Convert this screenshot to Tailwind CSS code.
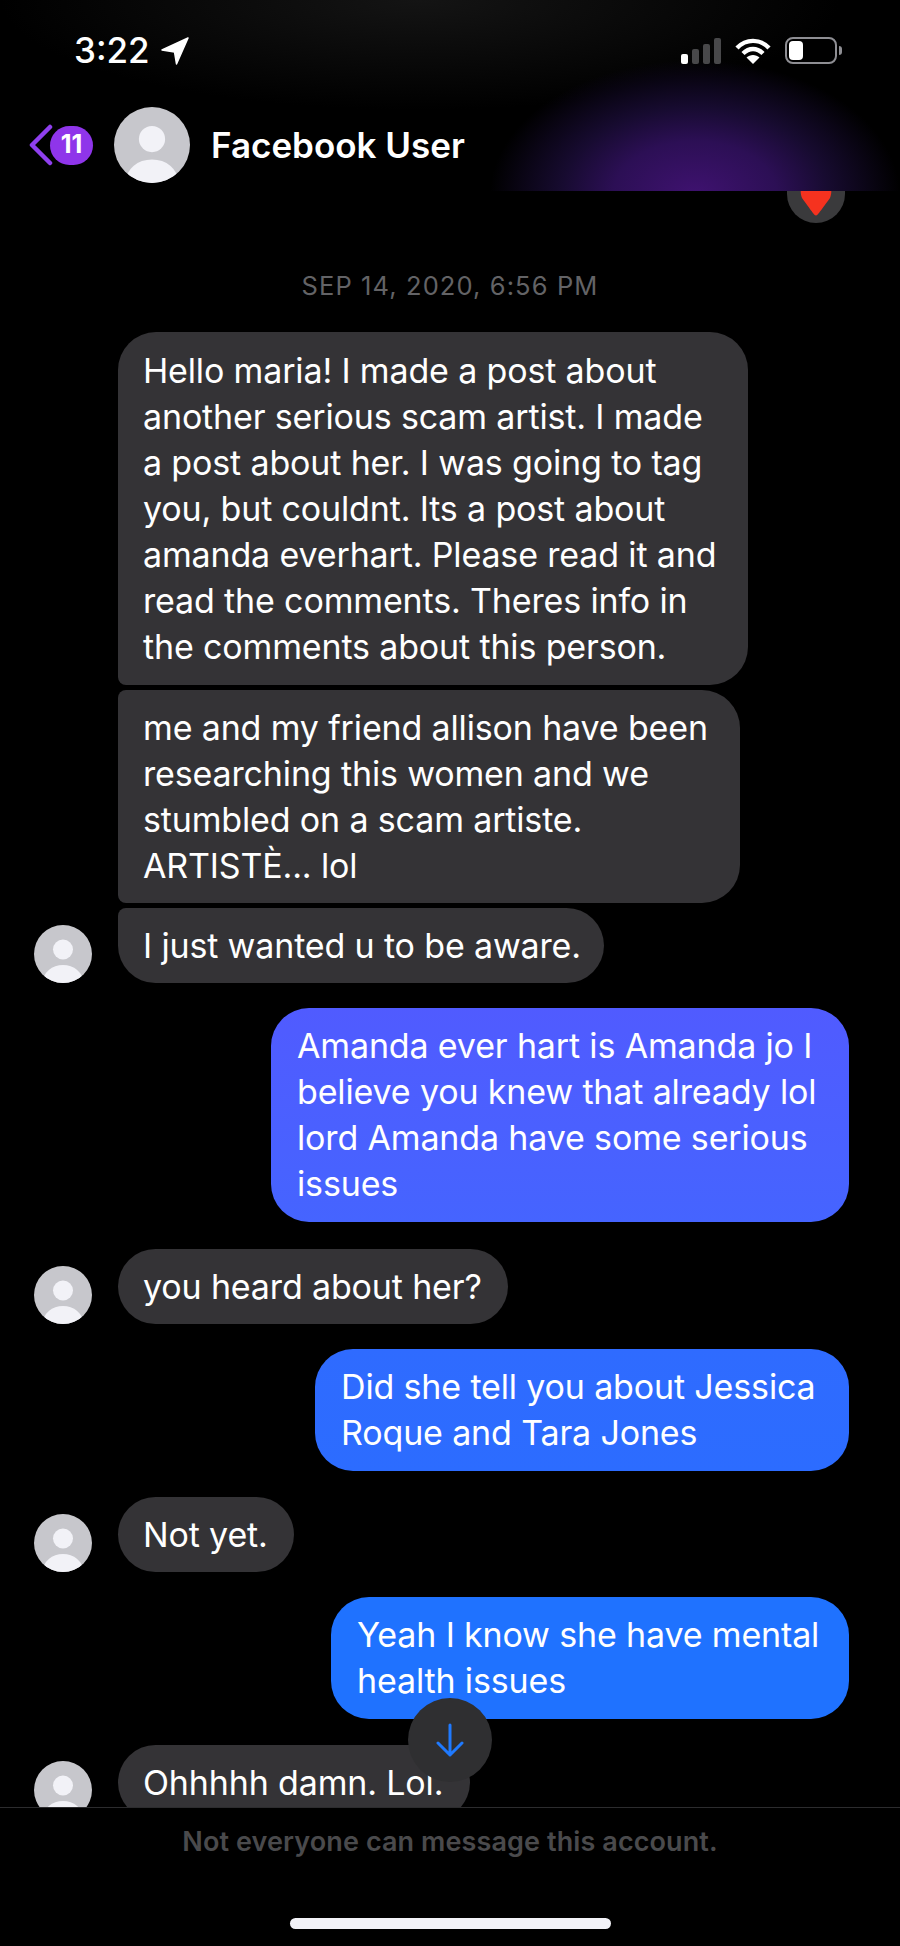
<!DOCTYPE html>
<html lang="en">
<head>
    <meta charset="UTF-8">
    <meta name="viewport" content="width=device-width, initial-scale=1.0">
    <title>Facebook User</title>
    <script src="https://cdn.jsdelivr.net/npm/@tailwindcss/browser@4"></script>
</head>
<body class="bg-black text-white font-['Inter','Liberation_Sans',sans-serif]">
    <div class="relative w-[900px] h-[1946px] flex flex-col bg-black overflow-hidden">

        <!-- Status bar and conversation title -->
        <header class="relative z-10 h-[191px] shrink-0 pt-[37px] bg-[radial-gradient(ellipse_205px_135px_at_695px_195px,#3f1270_0%,#2c0f55_40%,#170b30_65%,#0a0515_85%,transparent_100%),radial-gradient(ellipse_420px_110px_at_420px_0px,#141414_0%,transparent_100%)]">
            <div class="flex items-center h-[27px] pl-[74px] pr-[63px]">
                <span class="text-[35px] leading-[27px] font-medium">3:22</span>
                <svg class="ml-[11px]" width="28" height="28" viewBox="0 0 28 28"><path d="M27 1 L1 13 L13.5 15 L15.5 27 Z" fill="#fff" stroke="#fff" stroke-width="1.5" stroke-linejoin="round"/></svg>
                <div class="ml-auto flex items-end gap-[4px] h-[26px]">
                    <span class="w-[7px] h-[10px] rounded-[2px] bg-white"></span>
                    <span class="w-[7px] h-[15px] rounded-[2px] bg-[#48484a]"></span>
                    <span class="w-[7px] h-[20px] rounded-[2px] bg-[#48484a]"></span>
                    <span class="w-[7px] h-[26px] rounded-[2px] bg-[#48484a]"></span>
                </div>
                <svg class="ml-[14px]" width="36" height="26" viewBox="0 0 36 26" fill="none" stroke="#fff" stroke-width="4.4">
                    <path d="M2 10 C11 0.5 25 0.5 34 10"/>
                    <path d="M8 15.5 C14 9.5 22 9.5 28 15.5"/>
                    <path d="M18 26 L11.5 19.5 C15 16 21 16 24.5 19.5 Z" fill="#fff" stroke="none"/>
                </svg>
                <div class="ml-[14px] relative w-[52px] h-[27px] rounded-[8px] border-2 border-[#8e8e93] p-[2px]">
                    <div class="w-[14px] h-full rounded-[4px] bg-white"></div>
                    <div class="absolute right-[-7px] top-[7px] w-[3px] h-[9px] rounded-r-[3px] bg-[#8e8e93]"></div>
                </div>
            </div>
            <div class="flex items-center pl-[29px] mt-[43px]">
                <svg width="24" height="42" viewBox="0 0 24 42" fill="none" stroke="#8f3fee" stroke-width="4.5" stroke-linecap="round" stroke-linejoin="round"><path d="M21 3 L3 21 L21 39"/></svg>
                <span class="-ml-[3px] w-[43px] h-[39px] rounded-full bg-[#8f35ea] flex items-center justify-center text-[25px] font-bold">11</span>
                <div class="ml-[21px] w-[76px] h-[76px] rounded-full overflow-hidden">
                    <svg width="76" height="76" viewBox="0 0 58 58"><rect width="58" height="58" fill="#c7c7cc"/><circle cx="29" cy="24.5" r="10" fill="#f2f2f7"/><ellipse cx="29" cy="57" rx="20" ry="17" fill="#f2f2f7"/></svg>
                </div>
                <h1 class="ml-[21px] text-[35px] font-semibold">Facebook User</h1>
            </div>
        </header>

        <!-- Message thread -->
        <main class="flex-1 min-h-0 overflow-hidden flex flex-col text-[34px] leading-[46px] tracking-[-0.15px] whitespace-nowrap">
            <div class="-mt-[28px] self-end mr-[55px] w-[58px] h-[60px] shrink-0 rounded-full bg-[#3a3a3c] flex items-end justify-center pb-[7px]">
                <svg width="32" height="36" viewBox="0 0 32 36"><path d="M16 35.5 C14.5 35.5 13 33 2 18 C-2 8 4 0 10 0 C13 0 15 2 16 4 C17 2 19 0 22 0 C28 0 34 8 30 18 C19 33 17.5 35.5 16 35.5 Z" fill="#f5321f"/></svg>
            </div>
            <p class="mt-[48px] text-center text-[25.5px] leading-[30px] tracking-[1.1px] text-[#636366] shrink-0">SEP 14, 2020, 6:56 PM</p>

            <div class="mt-[31px] ml-[118px] flex flex-col gap-[5px] shrink-0">
                <div class="w-[630px] px-[25px] pt-[16px] pb-[15px] bg-[#343336] rounded-[38px] rounded-bl-[8px]">Hello maria! I made a post about<br>another serious scam artist. I made<br>a post about her. I was going to tag<br>you, but couldnt. Its a post about<br>amanda everhart. Please read it and<br>read the comments. Theres info in<br>the comments about this person.</div>
                <div class="w-[622px] px-[25px] pt-[15px] pb-[14px] bg-[#343336] rounded-[38px] rounded-l-[8px]">me and my friend allison have been<br>researching this women and we<br>stumbled on a scam artiste.<br>ARTISTÈ... lol</div>
                <div class="relative w-[486px] px-[25px] pt-[15px] pb-[14px] bg-[#343336] rounded-[38px] rounded-tl-[8px]">
                    I just wanted u to be aware.
                    <svg class="absolute -left-[84px] bottom-0 rounded-full" width="58" height="58" viewBox="0 0 58 58"><rect width="58" height="58" fill="#c7c7cc"/><circle cx="29" cy="24.5" r="10" fill="#f2f2f7"/><ellipse cx="29" cy="57" rx="20" ry="17" fill="#f2f2f7"/></svg>
                </div>
            </div>

            <div class="mt-[25px] self-end mr-[51px] w-[578px] px-[26px] pt-[15px] pb-[15px] rounded-[38px] bg-gradient-to-b from-[#505bff] to-[#4564ff] shrink-0">Amanda ever hart is Amanda jo I<br>believe you knew that already lol<br>lord Amanda have some serious<br>issues</div>

            <div class="mt-[27px] ml-[34px] flex items-end gap-[26px] shrink-0">
                <svg class="rounded-full" width="58" height="58" viewBox="0 0 58 58"><rect width="58" height="58" fill="#c7c7cc"/><circle cx="29" cy="24.5" r="10" fill="#f2f2f7"/><ellipse cx="29" cy="57" rx="20" ry="17" fill="#f2f2f7"/></svg>
                <div class="w-[390px] px-[25px] pt-[15px] pb-[14px] bg-[#343336] rounded-[38px]">you heard about her?</div>
            </div>

            <div class="mt-[25px] self-end mr-[51px] w-[534px] px-[26px] pt-[15px] pb-[15px] rounded-[38px] bg-gradient-to-b from-[#2f6bff] to-[#2c6cff] shrink-0">Did she tell you about Jessica<br>Roque and Tara Jones</div>

            <div class="mt-[26px] ml-[34px] flex items-end gap-[26px] shrink-0">
                <svg class="rounded-full" width="58" height="58" viewBox="0 0 58 58"><rect width="58" height="58" fill="#c7c7cc"/><circle cx="29" cy="24.5" r="10" fill="#f2f2f7"/><ellipse cx="29" cy="57" rx="20" ry="17" fill="#f2f2f7"/></svg>
                <div class="w-[176px] px-[25px] pt-[15px] pb-[14px] bg-[#343336] rounded-[38px]">Not yet.</div>
            </div>

            <div class="mt-[25px] self-end mr-[51px] w-[518px] px-[26px] pt-[15px] pb-[15px] rounded-[38px] bg-[#1f72ff] shrink-0">Yeah I know she have mental<br>health issues</div>

            <div class="mt-[26px] ml-[34px] flex items-start gap-[26px] shrink-0">
                <svg class="rounded-full mt-[16px]" width="58" height="58" viewBox="0 0 58 58"><rect width="58" height="58" fill="#c7c7cc"/><circle cx="29" cy="24.5" r="10" fill="#f2f2f7"/><ellipse cx="29" cy="57" rx="20" ry="17" fill="#f2f2f7"/></svg>
                <div class="w-[352px] px-[25px] pt-[15px] pb-[14px] bg-[#343336] rounded-[38px]">Ohhhhh damn. Lol.</div>
            </div>
        </main>

        <!-- Scroll to latest message -->
        <button class="absolute left-[408px] top-[1698px] w-[84px] h-[84px] rounded-full bg-[#2f2f31] flex items-center justify-center">
            <svg width="30" height="34" viewBox="0 0 30 34" fill="none" stroke="#1f7aff" stroke-width="3" stroke-linecap="round" stroke-linejoin="round"><path d="M15 2 V32 M3 20 L15 32 L27 20"/></svg>
        </button>

        <!-- Disabled composer notice -->
        <footer class="h-[139px] shrink-0 border-t border-[#2c2c2e] bg-black flex flex-col items-center">
            <p class="mt-[17px] text-[27px] leading-[34px] font-semibold text-[#4a4a4c] tracking-[0.1px]">Not everyone can message this account.</p>
            <div class="mt-[59px] w-[321px] h-[11px] rounded-full bg-[#f2f2f7]"></div>
        </footer>
    </div>
</body>
</html>
